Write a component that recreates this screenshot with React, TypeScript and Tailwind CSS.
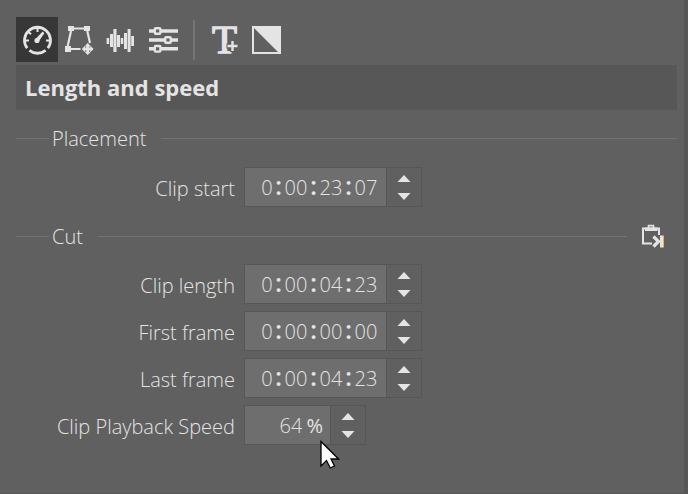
import React from "react";

function ToolButton({
    label,
    active,
    children,
}: {
    label: string;
    active?: boolean;
    children: React.ReactNode;
}) {
    return (
        <button
            type="button"
            aria-label={label}
            aria-pressed={active ?? false}
            className={active ? "bg-[#373737]" : "hover:bg-[#555555]"}
        >
            <svg width="42" height="45" viewBox="0 0 42 45" fill="#e4e4e4">
                {children}
            </svg>
        </button>
    );
}

function Toolbar() {
    return (
        <div role="toolbar" aria-label="Clip properties" className="flex items-center">
            <ToolButton label="Length and speed" active>
                <g fill="none" stroke="#e4e4e4" strokeWidth="2.8">
                    <path d="M11.2 31.2A13 13 0 1 1 31.8 31.2" />
                    <path d="M13.4 33.4A13 13 0 0 0 29.6 33.4" />
                    <path d="M21.5 11V15M9 23.5H13M30 23.5H34M12.5 15L15 17.3" strokeWidth="2" />
                </g>
                <circle cx="21" cy="23.5" r="2.6" />
                <path d="M19.6 22L26.6 14.6L28.4 16.2L22.6 24.6Z" />
            </ToolButton>
            <ToolButton label="Transform">
                <path d="M10 9h6v5h-6zM26 9h6v5h-6zM7 29h6v6H7z" />
                <path
                    d="M16 11.5H26M13 14L9.7 29M29.3 14L32 26M13 32H22.5"
                    fill="none"
                    stroke="#e4e4e4"
                    strokeWidth="2.2"
                />
                <path d="M29.7 26l3.2 3.4h-1.8v1.2h1.3v-1.9l3.2 3.3l-3.2 3.3v-1.9h-1.3v1.3h1.8l-3.2 3.3l-3.2-3.3h1.8v-1.3H27v1.9l-3.2-3.3l3.2-3.3v1.9h1.3v-1.2h-1.8z" />
            </ToolButton>
            <ToolButton label="Audio">
                <path d="M6.6 21h2.6v6H6.6zM10 17h3v13h-3zM13.4 12h3.1v23h-3.1zM17 18h3v12h-3zM20.7 21h2.6v6h-2.6zM24 16h3v16h-3zM27.6 12h3v23h-3zM31.2 19h2.8v10h-2.8z" />
            </ToolButton>
            <ToolButton label="Settings">
                <path d="M7 12.2h29v3.6H7zM7 21.2h29v3.6H7zM7 30h29v3.6H7z" />
                <g fill="#606060" stroke="#e4e4e4" strokeWidth="2.4">
                    <rect x="12.8" y="11.2" width="5.6" height="5.6" rx="1" />
                    <rect x="23.2" y="20.2" width="5.6" height="5.6" rx="1" />
                    <rect x="12.8" y="29" width="5.6" height="5.6" rx="1" />
                </g>
            </ToolButton>
            <div className="mx-[9px] h-10 w-0.5 bg-[#747474]" />
            <ToolButton label="Text">
                <text
                    x="20.5"
                    y="36"
                    textAnchor="middle"
                    fontSize="41"
                    stroke="#e4e4e4"
                    strokeWidth="1.3"
                    className="font-['Liberation_Serif',serif]"
                >
                    T
                </text>
                <path d="M28.5 23V35M22.5 29H34" stroke="#606060" strokeWidth="5" />
                <path d="M28.5 24V34M23.5 29H33.5" stroke="#e4e4e4" strokeWidth="2.4" />
            </ToolButton>
            <ToolButton label="Mask">
                <path d="M6 9h29v28H6zM8 11v24h24z" fillRule="evenodd" />
            </ToolButton>
        </div>
    );
}

function SectionTitle({ title, children }: { title: string; children?: React.ReactNode }) {
    return (
        <div className="flex h-8 items-center">
            <div className="h-px w-[33px] bg-[#737373]" />
            <h3 className="mr-[15px] ml-[3px] pt-0.5 text-xl leading-8 font-light">{title}</h3>
            <div className="h-px flex-1 bg-[#737373]" />
            {children}
        </div>
    );
}

function Spinner({ name }: { name: string }) {
    return (
        <div className="flex w-[35px] flex-col border-l border-[#565656] bg-[#606060]">
            <button type="button" aria-label={`Increase ${name}`} className="flex flex-1 items-end justify-center pb-[3px]">
                <svg width="14" height="7" viewBox="0 0 14 7" fill="#e4e4e4">
                    <path d="M0.5 7L7 0L13.5 7Z" />
                </svg>
            </button>
            <button type="button" aria-label={`Decrease ${name}`} className="flex flex-1 items-start justify-center pt-2">
                <svg width="14" height="7" viewBox="0 0 14 7" fill="#e4e4e4">
                    <path d="M0.5 0H13.5L7 7Z" />
                </svg>
            </button>
        </div>
    );
}

function FieldRow({ id, label, children }: { id: string; label: string; children: React.ReactNode }) {
    return (
        <div className="grid grid-cols-[219px_1fr] items-center gap-[9px]">
            <label htmlFor={id} className="pt-1 text-right text-xl leading-8 font-light whitespace-nowrap">
                {label}
            </label>
            <div className="flex">
                <div className="relative flex h-10 border border-[#565656] bg-[#6e6e6e]">
                    {children}
                    <Spinner name={label} />
                </div>
            </div>
        </div>
    );
}

const TIME_UNITS = ["hours", "minutes", "seconds", "frames"];

function TimeField({ id, label, value }: { id: string; label: string; value: string }) {
    return (
        <FieldRow id={id} label={label}>
            <div className="flex w-[141px] items-center justify-end pt-0.5 pr-2 text-xl leading-8 font-light">
                {value.split(":").map((part, i) => (
                    <React.Fragment key={i}>
                        {i > 0 && <span className="w-[11px] pb-1.5 text-center text-[26px] leading-8 font-semibold">:</span>}
                        <input
                            id={i === 0 ? id : undefined}
                            aria-label={i === 0 ? undefined : `${label} ${TIME_UNITS[i]}`}
                            defaultValue={part}
                            maxLength={2}
                            className={i === 0 ? "w-3 bg-transparent text-center outline-none" : "w-6 bg-transparent text-center outline-none"}
                        />
                    </React.Fragment>
                ))}
            </div>
        </FieldRow>
    );
}

export default function App() {
    return (
        <div className="min-h-screen border-r-4 border-b border-[#575757] bg-[#606060] pt-[17px] pr-[7px] pb-6 pl-4 font-['Open_Sans','Noto_Sans',sans-serif] text-[#e4e4e4]">
            <Toolbar />
            <h2 className="mt-[3px] bg-[#575757] px-[9px] text-[22px] leading-[45px] font-bold">Length and speed</h2>

            <section className="mt-3">
                <SectionTitle title="Placement" />
                <div className="mt-[13px]">
                    <TimeField id="clip-start" label="Clip start" value="0:00:23:07" />
                </div>
            </section>

            <section className="mt-[13px]">
                <SectionTitle title="Cut">
                    <button type="button" aria-label="Paste length" className="ml-[14px] mr-3">
                        <svg width="24" height="24" viewBox="0 0 24 24" fill="#e4e4e4">
                            <path d="M7.5 4V1.6h5V4" fill="none" stroke="#e4e4e4" strokeWidth="1.6" />
                            <path d="M4 3.5h12.5V7H4z" />
                            <path d="M18 11V4.5H2V19.5H11" fill="none" stroke="#e4e4e4" strokeWidth="2" />
                            <path d="M12.5 12.5L17.5 17.5L12.5 22.5" fill="none" stroke="#e4e4e4" strokeWidth="3.2" />
                            <path d="M19 11.5h3v12h-3z" />
                            <path d="M22 11.5h1v12h-1z" fill="#e8b84a" />
                        </svg>
                    </button>
                </SectionTitle>
                <div className="mt-3 flex flex-col gap-[7px]">
                    <TimeField id="clip-length" label="Clip length" value="0:00:04:23" />
                    <TimeField id="first-frame" label="First frame" value="0:00:00:00" />
                    <TimeField id="last-frame" label="Last frame" value="0:00:04:23" />
                    <FieldRow id="playback-speed" label="Clip Playback Speed">
                        <div className="flex w-[85px] items-center justify-end gap-1 pt-0.5 pr-[7px] text-xl leading-8">
                            <input
                                id="playback-speed"
                                defaultValue="64"
                                maxLength={3}
                                className="w-10 bg-transparent text-right font-light outline-none"
                            />
                            <span>%</span>
                        </div>
                        <svg
                            className="pointer-events-none absolute top-[34px] left-[75px]"
                            width="20"
                            height="29"
                            viewBox="0 0 20 29"
                            aria-hidden="true"
                        >
                            <path
                                d="M1 1.5V26L6.5 20.5L10.3 28L14.5 26L11 19H18.5Z"
                                fill="#ffffff"
                                stroke="#000000"
                                strokeWidth="1.3"
                            />
                        </svg>
                    </FieldRow>
                </div>
            </section>
        </div>
    );
}
